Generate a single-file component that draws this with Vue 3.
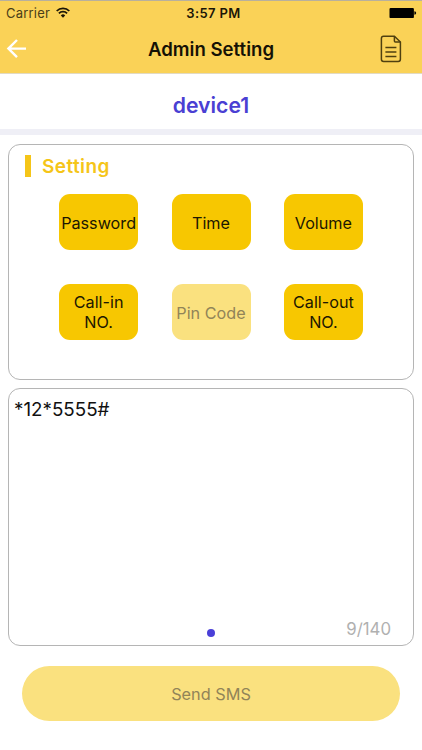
<template>
  <div class="screen">
    <header class="top">
      <div class="status-bar">
        <div class="carrier">
          <span>Carrier</span>
          <svg class="wifi" viewBox="0 0 14 11" width="14" height="11">
            <path d="M0.7 4 A8.7 8.7 0 0 1 13.3 4" />
            <path d="M2.9 6.4 A5.7 5.7 0 0 1 11.1 6.4" />
            <path class="wifi-dot" d="M7 10.8 L4.8 8.4 A3.2 3.2 0 0 1 9.2 8.4 Z" />
          </svg>
        </div>
        <span class="clock">3:57 PM</span>
        <svg class="battery" viewBox="0 0 28 12" width="28" height="12">
          <rect x="0.5" y="0.9" width="24.4" height="10.2" rx="1.2" />
          <path d="M25.4 4.2 Q27.2 4.5 27.2 6 Q27.2 7.5 25.4 7.8 Z" />
        </svg>
      </div>
      <nav class="nav-bar">
        <button class="icon-btn back" aria-label="Back">
          <svg viewBox="0 0 20 20" width="20" height="20">
            <path d="M20 9.6 H2.6 M11 1 L2.4 9.6 L11 18.2" />
          </svg>
        </button>
        <h1>Admin Setting</h1>
        <button class="icon-btn doc" aria-label="Log">
          <svg viewBox="0 0 22 28" width="22" height="28">
            <path d="M14.4 1.2 H3.6 Q1.4 1.2 1.4 3.4 V24.2 Q1.4 26.4 3.6 26.4 H18.2 Q20.4 26.4 20.4 24.2 V7 Z" />
            <path d="M14.4 1.2 V6 Q14.4 7 15.4 7 H20.4" />
            <path d="M5.4 12.5 H16.4 M5.4 17 H16.4 M5.4 21.5 H16.4" />
          </svg>
        </button>
      </nav>
    </header>

    <h2 class="device">{{ deviceName }}</h2>

    <section class="panel setting">
      <h3>Setting</h3>
      <div class="grid">
        <button
          v-for="item in items"
          :key="item.id"
          class="tile"
          :disabled="item.id === selected"
          @click="selected = item.id"
        >
          <span v-for="line in item.lines" :key="line">{{ line }}</span>
        </button>
      </div>
    </section>

    <section class="panel message">
      <textarea v-model="message" :maxlength="maxLength" spellcheck="false"></textarea>
      <span class="page-dot"></span>
      <span class="count">{{ message.length }}/{{ maxLength }}</span>
    </section>

    <button class="send" disabled>Send SMS</button>
  </div>
</template>

<script setup>
import { ref } from 'vue';

const deviceName = 'device1';
const maxLength = 140;

const items = [
  { id: 'password', lines: ['Password'] },
  { id: 'time', lines: ['Time'] },
  { id: 'volume', lines: ['Volume'] },
  { id: 'call-in', lines: ['Call-in', 'NO.'] },
  { id: 'pin-code', lines: ['Pin Code'] },
  { id: 'call-out', lines: ['Call-out', 'NO.'] },
];

const selected = ref('pin-code');
const message = ref('*12*5555#');
</script>

<style>
body {
  margin: 0;
  background: #fff;
}
</style>

<style scoped>
.screen {
  box-sizing: border-box;
  display: flex;
  flex-direction: column;
  height: 750px;
  overflow: hidden;
  background: #fff;
  color: #111;
  font-family: Inter, "Liberation Sans", sans-serif;
}

button {
  padding: 0;
  border: none;
  color: inherit;
  font-family: inherit;
}

h1,
h2,
h3 {
  margin: 0;
  font-weight: 600;
}

.top {
  box-sizing: border-box;
  height: 74px;
  background: #fad257;
  border-top: 1px solid #b9b09c;
  border-bottom: 1px solid #e2dac2;
}

.status-bar {
  display: grid;
  grid-template-columns: 1fr auto 1fr;
  align-items: center;
  height: 24px;
  padding: 0 5px 0 6px;
  font-size: 13px;
}

.carrier {
  display: flex;
  align-items: center;
  gap: 6px;
  letter-spacing: 0.2px;
  color: #4a3e18;
}

.wifi {
  margin-bottom: 2px;
  fill: none;
  stroke: #1b1607;
  stroke-width: 1.8;
}

.wifi-dot {
  fill: #1b1607;
  stroke: none;
}

.clock {
  margin-left: 4px;
  font-size: 13px;
  font-weight: 600;
  letter-spacing: 0.4px;
  color: #1b1607;
}

.battery {
  justify-self: end;
}

.nav-bar {
  display: grid;
  grid-template-columns: 1fr auto 1fr;
  align-items: center;
  height: 47px;
  padding: 0 20px 0 6px;
}

.nav-bar h1 {
  margin-left: 14px;
  font-size: 18.6px;
  color: #151105;
}

.icon-btn {
  display: flex;
  background: none;
  cursor: pointer;
}

.icon-btn svg {
  fill: none;
}

.back svg {
  overflow: visible;
  stroke: #fff;
  stroke-width: 2.4;
}

.doc {
  justify-self: end;
}

.doc svg {
  stroke: #4f4010;
  stroke-width: 1.5;
}

.device {
  box-sizing: border-box;
  height: 61px;
  padding-top: 4px;
  border-bottom: 6px solid #efeff6;
  font-size: 21.2px;
  line-height: 55px;
  text-align: center;
  color: #4a3fd3;
}

.panel {
  box-sizing: border-box;
  margin: 0 8px;
  border: 1.5px solid #b5b5b5;
  border-radius: 12px;
}

.setting {
  height: 236px;
  margin-top: 9px;
  padding: 9px 16px 0;
}

.setting h3 {
  display: flex;
  align-items: center;
  gap: 11px;
  height: 24px;
  font-size: 19px;
  letter-spacing: 0.4px;
  color: #f5c518;
}

.setting h3::before {
  content: '';
  width: 6px;
  height: 22px;
  background: #f5c518;
}

.grid {
  display: grid;
  grid-template-columns: repeat(3, 79px);
  grid-auto-rows: 56px;
  justify-content: center;
  gap: 34px 33.4px;
  margin-top: 16px;
}

.tile {
  display: flex;
  flex-direction: column;
  align-items: center;
  justify-content: center;
  border-radius: 11px;
  background: #f7c701;
  font-size: 16.2px;
  line-height: 20px;
  white-space: nowrap;
  color: #1c1702;
  cursor: pointer;
}

.tile span:only-child {
  padding-top: 1px;
}

.tile:disabled {
  background: #fae17f;
  color: #918458;
}

.message {
  position: relative;
  height: 258px;
  margin-top: 8px;
}

.message textarea {
  box-sizing: border-box;
  display: block;
  width: 100%;
  height: 100%;
  padding: 9px 5px;
  border: none;
  border-radius: 12px;
  outline: none;
  resize: none;
  background: none;
  font-family: inherit;
  font-size: 18.8px;
  font-feature-settings: "calt" 0;
  line-height: 24px;
  color: #111;
}

.page-dot {
  position: absolute;
  left: 50%;
  bottom: 8px;
  width: 8px;
  height: 8px;
  margin-left: -4px;
  border-radius: 50%;
  background: #4a3fd8;
}

.count {
  position: absolute;
  right: 22px;
  bottom: 6px;
  font-size: 16.8px;
  line-height: 20px;
  color: #b0b0b0;
}

.send {
  height: 55px;
  margin: 20px 22px 0;
  border-radius: 28px;
  background: #fae17f;
  font-size: 16.3px;
  color: #918458;
}
</style>
